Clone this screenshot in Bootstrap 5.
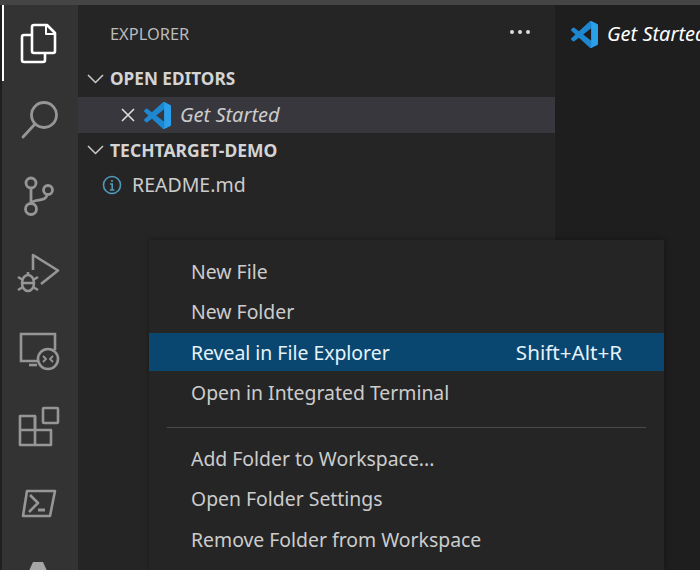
<!DOCTYPE html>
<html lang="en">
<head>
<meta charset="utf-8">
<title>Explorer</title>
<link href="https://cdn.jsdelivr.net/npm/bootstrap@5.3.0/dist/css/bootstrap.min.css" rel="stylesheet">
<script src="https://cdn.jsdelivr.net/npm/bootstrap@5.3.0/dist/js/bootstrap.bundle.min.js"></script>
<style>
html,body{height:570px;width:700px;overflow:hidden;margin:0}
body{background:#1e1e1e;font-family:"Noto Sans","Open Sans",sans-serif;color:#ccc;position:relative}
.topstrip{height:5px;background:#454545}
.shell{height:565px}
.activity{width:78px;background:#333;position:relative;overflow:hidden;padding-top:15px;border-left:2px solid #1f1f1f}
.activity-marker{position:absolute;left:-1px;top:0;width:3px;height:76px;background:#fff}
.act-ico{display:block;width:44px;height:44px;margin-left:16px;margin-bottom:33px;overflow:visible}
.sidepane{width:477px;background:#252526}
.pane-title{height:56px;padding:17px 0 0 32px;font-size:16.4px;color:#bbb;line-height:24px}
.pane-dots{position:absolute;left:509px;top:29px}
.sec-row{height:36px;font-size:17.2px;font-weight:700;color:#d4d4d4;padding-left:9px;gap:6px}
.sec-row.is-tight{height:34px;font-size:17.5px}
.file-row{height:36px;color:#ccc}
.file-row.is-open{background:#37373d;padding-left:43px;gap:9px;font-size:20px}
.file-row.is-plain{padding-left:24px;gap:10px;font-size:19.5px}
.editor-pane{background:#1e1e1e;overflow:hidden;min-width:0}
.tab-head{padding-left:16px;gap:9px;font-size:20px;color:#fff;font-style:italic;white-space:nowrap;height:58px}
.ctx-menu{position:absolute;left:149px;top:240px;width:515px;height:330px;background:#252526;box-shadow:0 0 6px rgba(0,0,0,.35);padding-top:12px;color:#ccc;font-size:19.4px}
.ctx-item{height:40px;padding:0 42px;line-height:40px;white-space:nowrap}
.ctx-item.is-active{background:#094771;color:#e6f2fa;height:38px;line-height:39px;margin:1px 0 2px}
.ctx-item.is-active .ctx-key{font-size:20.6px}
.ctx-sep{height:1px;background:#4a4a4a;margin:14px 18px 11px}
.ctx-item.is-last{margin-top:1px}
</style>
</head>
<body>
<svg width="0" height="0" class="position-absolute">
  <symbol id="vslogo" viewBox="0 0 100 100">
    <path fill="#1f86d0" fill-rule="evenodd" d="M70.900 99.300a6.200 6.200 0 0 0 5-.2l20.600-9.900a6.200 6.200 0 0 0 3.500-5.600V16.400a6.200 6.200 0 0 0-3.500-5.600L75.900.9a6.200 6.200 0 0 0-7.100 1.200L29.400 38 12.200 25a4.200 4.200 0 0 0-5.300.2L1.400 30.300a4.200 4.200 0 0 0 0 6.200L16.300 50 1.400 63.600a4.200 4.200 0 0 0 0 6.200l5.500 5a4.200 4.200 0 0 0 5.300.2L29.400 62l39.400 36a6.200 6.200 0 0 0 2.100 1.300zM75 27.300 45.100 50 75 72.700z"/>
    <path fill="#2ba0ea" d="M70.900 99.300a6.200 6.200 0 0 0 5-.2l20.600-9.900a6.200 6.200 0 0 0 3.500-5.600V16.400a6.200 6.200 0 0 0-3.500-5.600L75.900.9a6.200 6.200 0 0 0-5-.2C73 1.700 75 4 75 7v86c0 3-2 5.300-4.100 6.300z"/>
  </symbol>
</svg>
<div class="topstrip"></div>
<div class="shell d-flex">
  <nav class="activity flex-shrink-0">
    <div class="activity-marker"></div>
    <svg class="act-ico" viewBox="0 0 44 44" fill="none" stroke="#fff" stroke-width="2.6" stroke-linejoin="round"><path d="M14 15H6a2 2 0 0 0-2 2v23a2 2 0 0 0 2 2h19a2 2 0 0 0 2-2v-7"/><path d="M14 7a2 2 0 0 1 2-2h13l8 8v18a2 2 0 0 1-2 2H16a2 2 0 0 1-2-2z"/><path d="M28 5v9h9" stroke-width="2"/></svg>
    <svg class="act-ico" viewBox="0 0 44 44" fill="none" stroke="#969696" stroke-width="2.8"><circle cx="26" cy="18" r="12.500"/><path d="M17 27 5 40" stroke-linecap="round"/></svg>
    <svg class="act-ico" viewBox="0 0 44 44" fill="none" stroke="#969696" stroke-width="2.8"><circle cx="13" cy="9" r="5"/><circle cx="30" cy="16" r="4.500"/><circle cx="13" cy="35" r="5.500"/><path d="M13 14v15.500M13 30c1-2 3-3 5-3.500 5-1 10 0 11.500-6.500"/></svg>
    <svg class="act-ico" viewBox="0 0 44 44" fill="none" stroke="#969696" stroke-width="2.600" stroke-linejoin="round"><path d="M15 19V4l25 15.500L23 33"/><ellipse cx="10" cy="32" rx="6" ry="8"/><path d="M4 32h12M0 26l5 3M20 26l-5 3M0 39l5-3M20 39l-5-3M10 24v-3"/></svg>
    <svg class="act-ico" viewBox="0 0 44 44" fill="none" stroke="#969696" stroke-width="2.600"><path d="M19 33H3V6h34v16"/><path d="M11 37h8"/><circle cx="30" cy="31" r="10"/><path d="M25 28l3 3-3 3M35 28l-3 3 3 3" stroke-width="1.800"/></svg>
    <svg class="act-ico" viewBox="0 0 44 44" fill="none" stroke="#969696" stroke-width="2.600" stroke-linejoin="round"><path d="M17 11v29"/><path d="M2 11h15v14h16v15H2zM2 25h15"/><rect x="25" y="3" width="15" height="15" rx="1"/></svg>
    <svg class="act-ico" viewBox="0 0 44 44" fill="none" stroke="#969696" stroke-width="2.600" stroke-linejoin="round"><path d="M9 9H37L32 34H5z"/><path d="M12 13l8 8-9 9"/><path d="M20 28h7" stroke-width="3"/></svg>
    <svg class="act-ico" viewBox="0 0 44 44" fill="#a6a6a6"><path d="M10 14 15 3h10l5 11z"/></svg>
  </nav>
  <section class="sidepane flex-shrink-0">
    <div class="pane-title">EXPLORER</div>
    <svg class="pane-dots" width="22" height="6" viewBox="0 0 22 6" fill="#ddd"><circle cx="3" cy="3" r="2"/><circle cx="11" cy="3" r="2"/><circle cx="19" cy="3" r="2"/></svg>
    <div class="sec-row d-flex align-items-center">
      <svg width="17" height="10" viewBox="0 0 17 10" fill="none" stroke="#ccc" stroke-width="1.500"><path d="M1 1l7.500 7.500L16 1"/></svg>
      <span>OPEN EDITORS</span>
    </div>
    <div class="file-row is-open d-flex align-items-center">
      <svg width="14" height="14" viewBox="0 0 14 14" fill="none" stroke="#ddd" stroke-width="1.600"><path d="M1 1l12 12M13 1 1 13"/></svg>
      <svg width="27" height="27"><use href="#vslogo"/></svg>
      <i>Get Started</i>
    </div>
    <div class="sec-row is-tight d-flex align-items-center">
      <svg width="17" height="10" viewBox="0 0 17 10" fill="none" stroke="#ccc" stroke-width="1.500"><path d="M1 1l7.500 7.500L16 1"/></svg>
      <span>TECHTARGET-DEMO</span>
    </div>
    <div class="file-row is-plain d-flex align-items-center">
      <svg width="20" height="20" viewBox="0 0 20 20" fill="none" stroke="#519aba" stroke-width="1.600"><circle cx="10" cy="10" r="8.500"/><path d="M8 9h2.200v6M7.800 15h4.600M10 5v2"/></svg>
      <span>README.md</span>
    </div>
  </section>
  <main class="editor-pane flex-grow-1">
    <div class="tab-head d-flex align-items-center">
      <svg width="27" height="27" class="flex-shrink-0"><use href="#vslogo"/></svg>
      <span>Get Started</span>
    </div>
  </main>
</div>
<div class="ctx-menu">
  <div class="ctx-item">New File</div>
  <div class="ctx-item">New Folder</div>
  <div class="ctx-item is-active d-flex justify-content-between"><span>Reveal in File Explorer</span><span class="ctx-key">Shift+Alt+R</span></div>
  <div class="ctx-item">Open in Integrated Terminal</div>
  <div class="ctx-sep"></div>
  <div class="ctx-item">Add Folder to Workspace...</div>
  <div class="ctx-item">Open Folder Settings</div>
  <div class="ctx-item is-last">Remove Folder from Workspace</div>
</div>
</body>
</html>
